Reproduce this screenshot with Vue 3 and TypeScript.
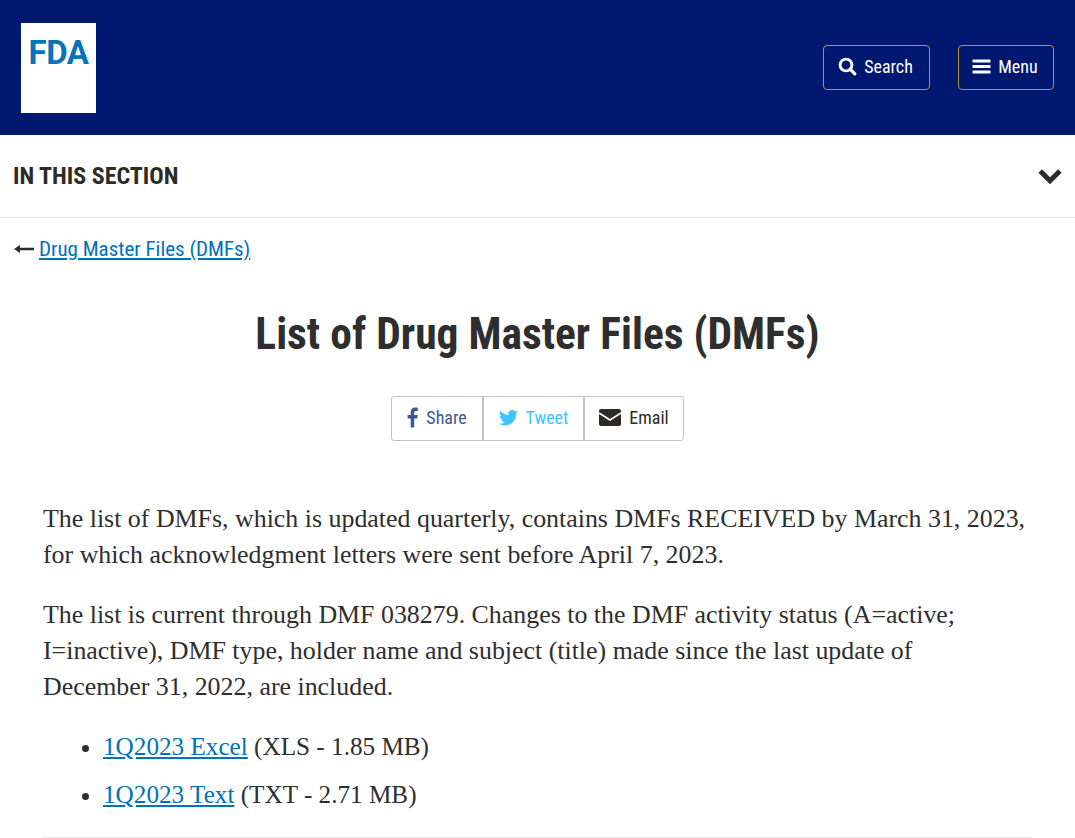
<template>
  <div class="page">
    <header class="site-header">
      <a class="logo"><span class="logo-text">FDA</span></a>
      <div class="header-actions">
        <button class="header-btn search-btn">
          <svg width="19" height="19" viewBox="0 0 19 19" fill="none">
            <circle cx="8" cy="8" r="5.9" stroke="#fff" stroke-width="2.9" />
            <path d="M12.2 12.2 16.8 16.8" stroke="#fff" stroke-width="3.2" stroke-linecap="round" />
          </svg>
          <span>Search</span>
        </button>
        <button class="header-btn menu-btn">
          <svg width="19" height="15" viewBox="0 0 19 15" fill="#fff">
            <rect x="0.5" y="0.5" width="18" height="3" rx="0.6" />
            <rect x="0.5" y="6" width="18" height="3" rx="0.6" />
            <rect x="0.5" y="11.5" width="18" height="3" rx="0.6" />
          </svg>
          <span>Menu</span>
        </button>
      </div>
    </header>

    <div class="section-bar">
      <span class="section-title">IN THIS SECTION</span>
      <svg width="26" height="18" viewBox="0 0 26 18" fill="none">
        <path d="M3.2 4 13 13.8 22.8 4" stroke="#2e2a25" stroke-width="5" />
      </svg>
    </div>

    <div class="back-row">
      <svg width="20" height="10" viewBox="0 0 20 10" fill="#2e2a25">
        <path d="M0 5 6 1V3.8H20V6.2H6V9Z" />
      </svg>
      <a class="back-link">Drug Master Files (DMFs)</a>
    </div>

    <h1 class="title">List of Drug Master Files (DMFs)</h1>

    <div class="share-row">
      <div class="share-group">
        <a class="share-btn share-fb">
          <svg width="11" height="21" viewBox="0 0 11 20" fill="#3b5998">
            <path d="M7.2 20V11h3l.5-3.6H7.2V5.2c0-1 .3-1.7 1.8-1.7h1.8V.3C10.500.2 9.400 0 8.200 0 5.500 0 3.700 1.600 3.700 4.700v2.700H.6V11h3.100v9z" />
          </svg>
          <span>Share</span>
        </a>
        <a class="share-btn share-tw">
          <svg width="19" height="16" viewBox="0 0 24 20" fill="#40c4ff">
            <path d="M24 2.400a9.800 9.800 0 0 1-2.800.8A4.900 4.900 0 0 0 23.300.5a9.800 9.800 0 0 1-3.100 1.200 4.900 4.900 0 0 0-8.400 4.500A13.900 13.900 0 0 1 1.700.9a4.900 4.900 0 0 0 1.500 6.600 4.900 4.900 0 0 1-2.200-.6v.1a4.900 4.900 0 0 0 3.900 4.800 4.900 4.900 0 0 1-2.200.1 4.900 4.900 0 0 0 4.600 3.400A9.900 9.900 0 0 1 0 17.300 13.900 13.900 0 0 0 7.500 19.500c9.100 0 14-7.500 14-14v-.6A10 10 0 0 0 24 2.400z" />
          </svg>
          <span>Tweet</span>
        </a>
        <a class="share-btn share-mail">
          <svg width="22" height="17" viewBox="0 0 22 17">
            <rect x="0" y="0" width="22" height="17" rx="2" fill="#2e2a25" />
            <path d="M0 4 11 11 22 4" stroke="#fff" stroke-width="1.8" fill="none" />
          </svg>
          <span>Email</span>
        </a>
      </div>
    </div>

    <main class="content">
      <p>The list of DMFs, which is updated quarterly, contains DMFs RECEIVED by March 31, 2023, for which acknowledgment letters were sent before April 7, 2023.</p>
      <p>The list is current through DMF 038279. Changes to the DMF activity status (A=active; I=inactive), DMF type, holder name and subject (title) made since the last update of December&nbsp;31, 2022, are included.</p>
      <ul>
        <li v-for="file in files" :key="file.label">
          <a>{{ file.label }}</a> {{ file.meta }}
        </li>
      </ul>
      <hr />
    </main>
  </div>
</template>

<script setup lang="ts">
const files: { label: string; meta: string }[] = [
  { label: '1Q2023 Excel', meta: '(XLS - 1.85 MB)' },
  { label: '1Q2023 Text', meta: '(TXT - 2.71 MB)' },
]
</script>

<style>
html,
body {
  margin: 0;
  background: #fff;
  overflow: hidden;
}
</style>

<style scoped>
.page {
  height: 838px;
  overflow: hidden;
  color: #2e2e2e;
  font-family: Roboto, "Liberation Sans", sans-serif;
  font-stretch: 75%;
}

.site-header {
  height: 135px;
  background: #00186f;
  display: flex;
  justify-content: space-between;
  box-sizing: border-box;
  padding: 23px 21px 0;
}

.logo {
  width: 75px;
  height: 90px;
  background: #fff;
  box-sizing: border-box;
  padding-top: 12px;
  text-align: center;
}

.logo-text {
  display: block;
  font-family: Roboto, sans-serif;
  font-stretch: normal;
  font-weight: 700;
  font-size: 33px;
  line-height: 36px;
  letter-spacing: -0.5px;
  color: #0673ba;
}

.header-actions {
  display: flex;
  gap: 28px;
  padding-top: 22px;
  height: 45px;
}

.header-btn {
  height: 45px;
  display: flex;
  align-items: center;
  justify-content: center;
  gap: 7px;
  box-sizing: border-box;
  background: transparent;
  color: #fff;
  border: 1px solid #b8962e;
  border-radius: 4px;
  padding: 0 2px 2px 0;
  font: inherit;
  font-stretch: 75%;
  font-size: 18px;
  font-weight: 400;
}

.search-btn {
  width: 107px;
}

.menu-btn {
  width: 96px;
}

.section-bar {
  height: 83px;
  box-sizing: border-box;
  border-bottom: 1px solid #e6e6e6;
  display: flex;
  align-items: center;
  justify-content: space-between;
  padding: 0 12px 0 13px;
}

.section-title {
  font-size: 24px;
  font-weight: 700;
  color: #2e2a25;
}

.back-row {
  display: flex;
  align-items: center;
  gap: 5px;
  padding: 18px 0 0 14px;
  height: 26px;
}

.back-link {
  font-size: 21px;
  color: #0071bc;
  text-decoration: underline;
}

.title {
  margin: 45px 0 0;
  text-align: center;
  font-size: 43.5px;
  line-height: 56px;
  font-weight: 700;
  color: #2e2e2e;
}

.share-row {
  display: flex;
  justify-content: center;
  margin-top: 33px;
}

.share-group {
  display: flex;
  height: 45px;
  box-sizing: border-box;
  border: 1px solid #c4c4c4;
  border-radius: 3px;
}

.share-btn {
  display: flex;
  align-items: center;
  justify-content: center;
  gap: 8px;
  font-size: 18px;
  box-sizing: border-box;
  padding-bottom: 2px;
}

.share-btn + .share-btn {
  border-left: 2px solid #c4c4c4;
}

.share-fb {
  width: 90px;
  color: #3b5998;
}

.share-tw {
  width: 101px;
  color: #40c4ff;
}

.share-mail {
  width: 100px;
  color: #2e2a25;
}

.content {
  padding: 0 43px;
  margin-top: 60px;
  font-family: "Liberation Serif", serif;
  font-stretch: normal;
  font-size: 25.9px;
  line-height: 36px;
  color: #2e2e2e;
}

.content p {
  margin: 0 0 24px;
}

.content ul {
  margin: 0;
  padding-left: 60px;
}

.content li {
  margin-bottom: 12px;
  font-size: 25.2px;
}

.content a {
  color: #0071bc;
  text-decoration: underline;
}

.content hr {
  border: 0;
  border-top: 1px solid #e6e6e6;
  margin: 24px 0 0;
}
</style>
